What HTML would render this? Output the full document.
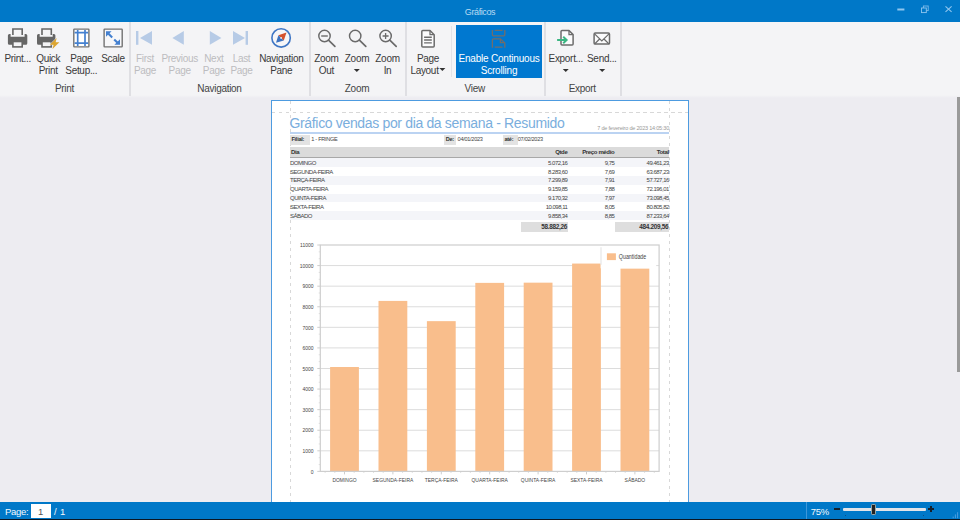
<!DOCTYPE html>
<html>
<head>
<meta charset="utf-8">
<style>
*{box-sizing:border-box;margin:0;padding:0}
html,body{width:960px;height:520px;overflow:hidden}
body{position:relative;background:#edecf1;font-family:"Liberation Sans",sans-serif;font-size:11px;color:#333}
.abs{position:absolute}
#title{left:0;top:0;width:960px;height:22.4px;background:#0078c8}
#title .t{left:0;width:960px;top:7px;text-align:center;font-size:9px;letter-spacing:-0.4px;color:#b9dcf3;line-height:11px}
#ribbon{left:0;top:22px;width:960px;height:75px;background:#f4f4f6}
#ribbonb{left:0;top:94.5px;width:960px;height:3.5px;background:linear-gradient(180deg,#f4f4f6,#edecf1)}
.sep{top:22.4px;width:1.2px;height:73.6px;background:#dfdfe3;margin-left:0.4px}
.lbl{position:absolute;text-align:center;line-height:12px;font-size:10px;letter-spacing:-0.3px;color:#3a3a3a;white-space:nowrap;transform:translateX(-50%)}
.lbl.dis{color:#bcbcbf}
.grp{position:absolute;top:83px;font-size:10px;letter-spacing:-0.3px;line-height:12px;color:#444;transform:translateX(-50%);white-space:nowrap}
.lbl.wh{color:#fff;letter-spacing:-0.2px}
.ar{display:inline-block;width:0;height:0;border-left:3px solid transparent;border-right:3px solid transparent;border-top:3px solid #333;vertical-align:2px}
.ar.in{margin-left:1px;vertical-align:3px}
.ic{position:absolute;overflow:visible}

.fb{background:#e3e3e3;font-size:5.6px;font-weight:bold;line-height:9px;padding-left:1.5px;letter-spacing:-0.3px;color:#333;white-space:nowrap;overflow:hidden}
.ft{font-size:5.6px;line-height:9.2px;letter-spacing:-0.3px;color:#444;white-space:nowrap}
.th{font-size:6px;font-weight:bold;line-height:11.2px;letter-spacing:-0.35px;color:#333;white-space:nowrap}
.td{font-size:6px;line-height:10px;letter-spacing:-0.5px;color:#444;white-space:nowrap}
.tot{background:#dedede;font-size:6.4px;font-weight:bold;line-height:10.2px;letter-spacing:-0.3px;color:#333;text-align:right;padding-right:1px;white-space:nowrap}
#status{left:0;top:502.2px;width:960px;height:18px;background:#0078c8}
.stx{font-size:9.5px;line-height:12px;color:#f4f9fd;letter-spacing:-0.3px;white-space:nowrap}
#page{left:271px;top:100px;width:418px;height:410px;background:#fff;border:1px solid #4f9be0}
</style>
</head>
<body>
<div id="title" class="abs"><div class="t abs">Gráficos</div></div>
<svg class="abs" style="left:885px;top:0" width="75" height="22" viewBox="885 0 75 22">
<path d="M897.3 9.5H904.4" stroke="#8fc6ef" stroke-width="2"/>
<rect x="923.4" y="6" width="4.8" height="4.6" fill="none" stroke="#7dbbea" stroke-width="0.9"/>
<rect x="921.5" y="8" width="4.8" height="4.6" fill="#0078c8" stroke="#8fc6ef" stroke-width="0.9"/>
<path d="M945.5 6.4L951.6 11.9M951.6 6.4L945.5 11.9" stroke="#8fc6ef" stroke-width="1.1"/>
</svg>
<div id="ribbon" class="abs"></div>
<div id="ribbonb" class="abs"></div>
<div class="abs" style="left:456px;top:24.6px;width:85.8px;height:53.2px;background:#0078d0"></div>
<div class="abs" style="left:451.2px;top:26px;width:1.3px;height:51px;background:#e3e3e7"></div>
<div class="abs sep" style="left:129px"></div>
<div class="abs sep" style="left:309px"></div>
<div class="abs sep" style="left:405px"></div>
<div class="abs sep" style="left:544px"></div>
<div class="abs sep" style="left:620px"></div>
<div class="lbl" style="left:17.7px;top:52.6px">Print...</div>
<div class="lbl" style="left:48.2px;top:52.6px">Quick<br>Print</div>
<div class="lbl" style="left:81.3px;top:52.6px">Page<br>Setup...</div>
<div class="lbl" style="left:113px;top:52.6px">Scale</div>
<div class="lbl dis" style="left:145px;top:52.6px">First<br>Page</div>
<div class="lbl dis" style="left:179.7px;top:52.6px">Previous<br>Page</div>
<div class="lbl dis" style="left:213.9px;top:52.6px">Next<br>Page</div>
<div class="lbl dis" style="left:241.5px;top:52.6px">Last<br>Page</div>
<div class="lbl" style="left:281.3px;top:52.6px">Navigation<br>Pane</div>
<div class="lbl" style="left:326.4px;top:52.6px">Zoom<br>Out</div>
<div class="lbl" style="left:357px;top:52.6px">Zoom<br><span class='ar'></span></div>
<div class="lbl" style="left:387.5px;top:52.6px">Zoom<br>In</div>
<div class="lbl" style="left:428px;top:52.6px">Page<br>Layout<span class='ar in'></span></div>
<div class="lbl wh" style="left:499px;top:52.6px">Enable Continuous<br>Scrolling</div>
<div class="lbl" style="left:565.8px;top:52.6px">Export...<br><span class='ar'></span></div>
<div class="lbl" style="left:601.8px;top:52.6px">Send...<br><span class='ar'></span></div>
<div class="grp" style="left:64.5px">Print</div>
<div class="grp" style="left:219.5px">Navigation</div>
<div class="grp" style="left:357px">Zoom</div>
<div class="grp" style="left:474.7px">View</div>
<div class="grp" style="left:582.3px">Export</div>


<svg class="ic" style="left:0;top:22px" width="640" height="75" viewBox="0 22 640 75">
<!-- print -->
<path d="M7.9 35.5Q7.9 34 9.4 34H10.600000000000001V36.7H24.6V34H25.8Q27.3 34 27.3 35.5V43.2Q27.3 44.7 25.8 44.7H9.4Q7.9 44.7 7.9 43.2Z" fill="#666666"/>
<path d="M12.9 35V29H22.2V35" fill="none" stroke="#666666" stroke-width="1.6"/>
<rect x="12.9" y="41.5" width="9.3" height="5.4" fill="#f4f4f6" stroke="#666666" stroke-width="1.6"/>
<!-- quick print -->
<path d="M37.0 35.5Q37.0 34 38.5 34H39.7V36.7H52.699999999999996V34H53.9Q55.4 34 55.4 35.5V43.2Q55.4 44.7 53.9 44.7H38.5Q37.0 44.7 37.0 43.2Z" fill="#666666"/>
<path d="M42.0 35V29H51.3V35" fill="none" stroke="#666666" stroke-width="1.6"/>
<rect x="42.0" y="41.5" width="9.3" height="5.4" fill="#f4f4f6" stroke="#666666" stroke-width="1.6"/>
<path d="M56.7 38 L49.8 44.7 L53.6 44.7 L52.5 48.9 L59.4 42.2 L55.6 42.2 Z" fill="#dda52f" stroke="#f4f4f6" stroke-width="0.9" paint-order="stroke"/>
<!-- page setup -->
<rect x="73.8" y="29.1" width="15.1" height="17.8" rx="0.6" fill="#fff" stroke="#727272" stroke-width="1.4"/>
<path d="M77.7 29.9V46.1M85 29.9V46.1M74.6 32.7H88.1M74.6 43.1H88.1" stroke="#4480d0" stroke-width="1.7" fill="none"/>
<!-- scale -->
<rect x="104.1" y="29.1" width="18.1" height="17.8" rx="0.6" fill="#f7f7f9" stroke="#727272" stroke-width="1.4"/>
<path d="M108.5 33.7L112.2 37.4M114.2 39.4L117.6 42.8" stroke="#4480d0" stroke-width="2.1"/>
<path d="M106 31.2h5.6l-5.6 5.6zM120 44.8h-5.6l5.6-5.6z" fill="#4480d0"/>
<!-- nav -->
<rect x="136" y="31" width="2.4" height="13.8" fill="#b7cbe6"/>
<path d="M140 37.9L152 31V44.8Z" fill="#b7cbe6"/>
<path d="M172.4 37.9L183.8 31V44.8Z" fill="#b7cbe6"/>
<path d="M221.4 37.9L209.8 31V44.8Z" fill="#b7cbe6"/>
<path d="M245 37.9L233 31V44.8Z" fill="#b7cbe6"/>
<rect x="245.6" y="31" width="2.4" height="13.8" fill="#b7cbe6"/>
<!-- compass -->
<circle cx="281.1" cy="37.9" r="9.2" fill="#f6f6f8" stroke="#3f76c4" stroke-width="1.6"/>
<path d="M286.5 32.6L278.4 35.3L283.8 40.4Z" fill="#d4522e"/>
<path d="M276 42.8L278.4 35.3L283.8 40.4Z" fill="#3c72c0"/>
<circle cx="281.1" cy="37.9" r="0.9" fill="#f6f6f8"/>
<!-- zoom -->
<circle cx="324.5" cy="36" r="5.7" fill="none" stroke="#6a6a6a" stroke-width="1.45"/><path d="M328.5 40.2L334.90000000000003 46.4" stroke="#6a6a6a" stroke-width="1.7" stroke-linecap="round"/><path d="M321.2 36H327.8" stroke="#6a6a6a" stroke-width="1.4"/>
<circle cx="355.2" cy="36" r="5.7" fill="none" stroke="#6a6a6a" stroke-width="1.45"/><path d="M359.4 40.2L365.8 46.4" stroke="#6a6a6a" stroke-width="1.7" stroke-linecap="round"/>
<circle cx="385.6" cy="36" r="5.7" fill="none" stroke="#6a6a6a" stroke-width="1.45"/><path d="M389.8 40.2L396.20000000000005 46.4" stroke="#6a6a6a" stroke-width="1.7" stroke-linecap="round"/><path d="M382.6 36H388.6M385.6 33V39" stroke="#6a6a6a" stroke-width="1.3"/>
<!-- page layout -->
<path d="M421.8 31.5Q421.8 30.5 422.8 30.5H430L434.2 34.7V45.9Q434.2 46.9 433.2 46.9H422.8Q421.8 46.9 421.8 45.9Z" fill="#fbfbfc" stroke="#6c6c6c" stroke-width="1.5" stroke-linejoin="round"/>
<path d="M430 30.7V34.7H434" fill="none" stroke="#6c6c6c" stroke-width="1.3"/>
<path d="M424.1 37.2H431.8M424.1 40H431.8M424.1 42.9H431.8" stroke="#6c6c6c" stroke-width="1.4"/>
<!-- continuous -->
<path d="M492.4 30V34.8Q492.4 35.8 493.4 35.8H503.8Q504.8 35.8 504.8 34.8V30" fill="none" stroke="#716d6a" stroke-width="1.3"/>
<path d="M494.7 30.4H502.5M494.7 47.2H502.5" fill="none" stroke="#716d6a" stroke-width="1.3"/>
<path d="M492.4 47.8V39.8Q492.4 38.8 493.4 38.8H500.4L504.8 43V47.8" fill="none" stroke="#716d6a" stroke-width="1.3"/>
<path d="M500.4 38.8V42.6H504.6" fill="none" stroke="#716d6a" stroke-width="1.3"/>
<!-- export -->
<path d="M561 31.5Q561 30.5 562 30.5H569L573.1 34.6V44.1Q573.1 45.1 572.1 45.1H562Q561 45.1 561 44.1Z" fill="#fbfbfc" stroke="#6c6c6c" stroke-width="1.5" stroke-linejoin="round"/>
<path d="M569 30.7V34.6H573" fill="none" stroke="#6c6c6c" stroke-width="1.3"/>
<path d="M557.1 40H566.2M563.2 36.8L566.6 40L563.2 43.2" fill="none" stroke="#3bb683" stroke-width="2" stroke-linejoin="miter"/>
<!-- send -->
<rect x="594.1" y="33.1" width="15.4" height="11" rx="1.2" fill="#fbfbfc" stroke="#6c6c6c" stroke-width="1.5"/>
<path d="M594.6 33.8L601.8 41L609 33.8M594.6 44L599.6 39M609 44L604 39" fill="none" stroke="#6c6c6c" stroke-width="1.2"/>
<!-- endicons -->
</svg>
<div class="abs" style="left:270.5px;top:99.7px;width:418.7px;height:410px;background:#fff;border:1.6px solid #4d9be0"></div>
<div class="abs" style="left:272px;top:112px;width:416px;height:1px;background:repeating-linear-gradient(90deg,#d8d8d8 0 3.5px,transparent 3.5px 7px)"></div>
<div class="abs" style="left:289.5px;top:101px;width:1px;height:402px;background:repeating-linear-gradient(180deg,#d8d8d8 0 3.5px,transparent 3.5px 7px)"></div>
<div class="abs" style="left:668.7px;top:101px;width:1px;height:402px;background:repeating-linear-gradient(180deg,#d8d8d8 0 3.5px,transparent 3.5px 7px)"></div>
<div class="abs" style="left:289.5px;top:115px;font-size:14px;line-height:16px;letter-spacing:-0.34px;color:#7aaedd;white-space:nowrap">Gráfico vendas por dia da semana - Resumido</div>
<div class="abs" style="left:290px;top:132.2px;width:379px;height:1.4px;background:#bbd3f2"></div>
<div class="abs rt" style="right:291px;top:124.6px;font-size:5.5px;line-height:7px;color:#999;white-space:nowrap;letter-spacing:-0.2px">7 de fevereiro de 2023 14:05:30</div>
<div class="abs fb" style="left:290px;top:135.2px;width:20.0px;height:10.2px">Filial:</div>
<div class="abs fb" style="left:444.3px;top:135.2px;width:12.1px;height:10.2px">De:</div>
<div class="abs fb" style="left:503px;top:135.2px;width:14.6px;height:10.2px">até:</div>
<div class="abs ft" style="left:311.3px;top:135.2px">1 - FRINGE</div>
<div class="abs ft" style="left:457.6px;top:135.2px">04/01/2023</div>
<div class="abs ft" style="left:517.8px;top:135.2px">07/02/2023</div>
<div class="abs" style="left:290px;top:147.2px;width:379px;height:9.6px;background:#dbdbdb"></div>
<div class="abs" style="left:290px;top:156.8px;width:379px;height:1.4px;background:#a8a8a8"></div>
<div class="abs th" style="left:291px;top:147.2px">Dia</div>
<div class="abs th" style="right:392.6px;top:147.2px">Qtde</div>
<div class="abs th" style="right:345.70000000000005px;top:147.2px">Preço médio</div>
<div class="abs th" style="right:291.20000000000005px;top:147.2px">Total</div>
<div class="abs" style="left:290px;top:158.30px;width:379px;height:8.6px;background:#f4f5f9"></div>
<div class="abs td" style="left:290px;top:157.80px">DOMINGO</div>
<div class="abs td" style="right:392.6px;top:157.80px">5.072,16</div>
<div class="abs td" style="right:345.70000000000005px;top:157.80px">9,75</div>
<div class="abs td" style="right:291.20000000000005px;top:157.80px">49.461,23</div>
<div class="abs td" style="left:290px;top:166.63px">SEGUNDA-FEIRA</div>
<div class="abs td" style="right:392.6px;top:166.63px">8.283,60</div>
<div class="abs td" style="right:345.70000000000005px;top:166.63px">7,69</div>
<div class="abs td" style="right:291.20000000000005px;top:166.63px">63.687,23</div>
<div class="abs" style="left:290px;top:175.96px;width:379px;height:8.6px;background:#f4f5f9"></div>
<div class="abs td" style="left:290px;top:175.46px">TERÇA-FEIRA</div>
<div class="abs td" style="right:392.6px;top:175.46px">7.299,89</div>
<div class="abs td" style="right:345.70000000000005px;top:175.46px">7,91</div>
<div class="abs td" style="right:291.20000000000005px;top:175.46px">57.727,16</div>
<div class="abs td" style="left:290px;top:184.29px">QUARTA-FEIRA</div>
<div class="abs td" style="right:392.6px;top:184.29px">9.159,85</div>
<div class="abs td" style="right:345.70000000000005px;top:184.29px">7,88</div>
<div class="abs td" style="right:291.20000000000005px;top:184.29px">72.196,01</div>
<div class="abs" style="left:290px;top:193.62px;width:379px;height:8.6px;background:#f4f5f9"></div>
<div class="abs td" style="left:290px;top:193.12px">QUINTA-FEIRA</div>
<div class="abs td" style="right:392.6px;top:193.12px">9.170,32</div>
<div class="abs td" style="right:345.70000000000005px;top:193.12px">7,97</div>
<div class="abs td" style="right:291.20000000000005px;top:193.12px">73.098,45</div>
<div class="abs td" style="left:290px;top:201.95px">SEXTA-FEIRA</div>
<div class="abs td" style="right:392.6px;top:201.95px">10.098,11</div>
<div class="abs td" style="right:345.70000000000005px;top:201.95px">8,05</div>
<div class="abs td" style="right:291.20000000000005px;top:201.95px">80.805,82</div>
<div class="abs" style="left:290px;top:211.28px;width:379px;height:8.6px;background:#f4f5f9"></div>
<div class="abs td" style="left:290px;top:210.78px">SÁBADO</div>
<div class="abs td" style="right:392.6px;top:210.78px">9.858,34</div>
<div class="abs td" style="right:345.70000000000005px;top:210.78px">8,85</div>
<div class="abs td" style="right:291.20000000000005px;top:210.78px">87.233,64</div>
<div class="abs tot" style="left:521px;top:221.9px;width:47px;height:10.2px">58.882,26</div>
<div class="abs tot" style="left:615.3px;top:221.9px;width:54px;height:10.2px">484.209,56</div>
<svg class="abs" style="left:0;top:0" width="960" height="520" viewBox="0 0 960 520">
<rect x="320.3" y="245.0" width="338.8" height="226.39999999999998" fill="#fff"/>
<path d="M320.3 450.82H659.1" stroke="#dcdcdc" stroke-width="1"/>
<path d="M320.3 430.24H659.1" stroke="#dcdcdc" stroke-width="1"/>
<path d="M320.3 409.65H659.1" stroke="#dcdcdc" stroke-width="1"/>
<path d="M320.3 389.07H659.1" stroke="#dcdcdc" stroke-width="1"/>
<path d="M320.3 368.49H659.1" stroke="#dcdcdc" stroke-width="1"/>
<path d="M320.3 347.91H659.1" stroke="#dcdcdc" stroke-width="1"/>
<path d="M320.3 327.33H659.1" stroke="#dcdcdc" stroke-width="1"/>
<path d="M320.3 306.75H659.1" stroke="#dcdcdc" stroke-width="1"/>
<path d="M320.3 286.16H659.1" stroke="#dcdcdc" stroke-width="1"/>
<path d="M320.3 265.58H659.1" stroke="#dcdcdc" stroke-width="1"/>
<path d="M317.3 471.40H320.3" stroke="#c8c8c8" stroke-width="0.9"/>
<path d="M318.7 464.55H320.3M318.7 457.67H320.3" stroke="#d4d4d4" stroke-width="0.7"/>
<text transform="translate(313.5,473.60) scale(0.83,1)" text-anchor="end" font-size="6" fill="#444">0</text>
<path d="M317.3 450.82H320.3" stroke="#c8c8c8" stroke-width="0.9"/>
<path d="M318.7 443.96H320.3M318.7 437.09H320.3" stroke="#d4d4d4" stroke-width="0.7"/>
<text transform="translate(313.5,453.02) scale(0.83,1)" text-anchor="end" font-size="6" fill="#444">1000</text>
<path d="M317.3 430.24H320.3" stroke="#c8c8c8" stroke-width="0.9"/>
<path d="M318.7 423.38H320.3M318.7 416.51H320.3" stroke="#d4d4d4" stroke-width="0.7"/>
<text transform="translate(313.5,432.44) scale(0.83,1)" text-anchor="end" font-size="6" fill="#444">2000</text>
<path d="M317.3 409.65H320.3" stroke="#c8c8c8" stroke-width="0.9"/>
<path d="M318.7 402.80H320.3M318.7 395.93H320.3" stroke="#d4d4d4" stroke-width="0.7"/>
<text transform="translate(313.5,411.85) scale(0.83,1)" text-anchor="end" font-size="6" fill="#444">3000</text>
<path d="M317.3 389.07H320.3" stroke="#c8c8c8" stroke-width="0.9"/>
<path d="M318.7 382.22H320.3M318.7 375.34H320.3" stroke="#d4d4d4" stroke-width="0.7"/>
<text transform="translate(313.5,391.27) scale(0.83,1)" text-anchor="end" font-size="6" fill="#444">4000</text>
<path d="M317.3 368.49H320.3" stroke="#c8c8c8" stroke-width="0.9"/>
<path d="M318.7 361.64H320.3M318.7 354.76H320.3" stroke="#d4d4d4" stroke-width="0.7"/>
<text transform="translate(313.5,370.69) scale(0.83,1)" text-anchor="end" font-size="6" fill="#444">5000</text>
<path d="M317.3 347.91H320.3" stroke="#c8c8c8" stroke-width="0.9"/>
<path d="M318.7 341.06H320.3M318.7 334.18H320.3" stroke="#d4d4d4" stroke-width="0.7"/>
<text transform="translate(313.5,350.11) scale(0.83,1)" text-anchor="end" font-size="6" fill="#444">6000</text>
<path d="M317.3 327.33H320.3" stroke="#c8c8c8" stroke-width="0.9"/>
<path d="M318.7 320.47H320.3M318.7 313.60H320.3" stroke="#d4d4d4" stroke-width="0.7"/>
<text transform="translate(313.5,329.53) scale(0.83,1)" text-anchor="end" font-size="6" fill="#444">7000</text>
<path d="M317.3 306.75H320.3" stroke="#c8c8c8" stroke-width="0.9"/>
<path d="M318.7 299.89H320.3M318.7 293.02H320.3" stroke="#d4d4d4" stroke-width="0.7"/>
<text transform="translate(313.5,308.95) scale(0.83,1)" text-anchor="end" font-size="6" fill="#444">8000</text>
<path d="M317.3 286.16H320.3" stroke="#c8c8c8" stroke-width="0.9"/>
<path d="M318.7 279.31H320.3M318.7 272.44H320.3" stroke="#d4d4d4" stroke-width="0.7"/>
<text transform="translate(313.5,288.36) scale(0.83,1)" text-anchor="end" font-size="6" fill="#444">9000</text>
<path d="M317.3 265.58H320.3" stroke="#c8c8c8" stroke-width="0.9"/>
<path d="M318.7 258.73H320.3M318.7 251.85H320.3" stroke="#d4d4d4" stroke-width="0.7"/>
<text transform="translate(313.5,267.78) scale(0.83,1)" text-anchor="end" font-size="6" fill="#444">10000</text>
<path d="M317.3 245.00H320.3" stroke="#c8c8c8" stroke-width="0.9"/>
<text transform="translate(313.5,247.20) scale(0.83,1)" text-anchor="end" font-size="6" fill="#444">11000</text>
<rect x="330.10" y="367.01" width="28.8" height="104.39" fill="#f9be8c"/>
<rect x="378.50" y="300.91" width="28.8" height="170.49" fill="#f9be8c"/>
<rect x="426.90" y="321.15" width="28.8" height="150.25" fill="#f9be8c"/>
<rect x="475.30" y="282.87" width="28.8" height="188.53" fill="#f9be8c"/>
<rect x="523.70" y="282.66" width="28.8" height="188.74" fill="#f9be8c"/>
<rect x="572.10" y="263.56" width="28.8" height="207.84" fill="#f9be8c"/>
<rect x="620.50" y="268.50" width="28.8" height="202.90" fill="#f9be8c"/>
<path d="M344.50 471.4v3" stroke="#c8c8c8" stroke-width="0.9"/>
<path d="M325.14 471.4v1.6M334.82 471.4v1.6M354.18 471.4v1.6M363.86 471.4v1.6" stroke="#d4d4d4" stroke-width="0.7"/>
<text transform="translate(344.50,482.3) scale(0.8,1)" text-anchor="middle" font-size="6.2" fill="#444">DOMINGO</text>
<path d="M392.90 471.4v3" stroke="#c8c8c8" stroke-width="0.9"/>
<path d="M373.54 471.4v1.6M383.22 471.4v1.6M402.58 471.4v1.6M412.26 471.4v1.6" stroke="#d4d4d4" stroke-width="0.7"/>
<text transform="translate(392.90,482.3) scale(0.8,1)" text-anchor="middle" font-size="6.2" fill="#444">SEGUNDA-FEIRA</text>
<path d="M441.30 471.4v3" stroke="#c8c8c8" stroke-width="0.9"/>
<path d="M421.94 471.4v1.6M431.62 471.4v1.6M450.98 471.4v1.6M460.66 471.4v1.6" stroke="#d4d4d4" stroke-width="0.7"/>
<text transform="translate(441.30,482.3) scale(0.8,1)" text-anchor="middle" font-size="6.2" fill="#444">TERÇA-FEIRA</text>
<path d="M489.70 471.4v3" stroke="#c8c8c8" stroke-width="0.9"/>
<path d="M470.34 471.4v1.6M480.02 471.4v1.6M499.38 471.4v1.6M509.06 471.4v1.6" stroke="#d4d4d4" stroke-width="0.7"/>
<text transform="translate(489.70,482.3) scale(0.8,1)" text-anchor="middle" font-size="6.2" fill="#444">QUARTA-FEIRA</text>
<path d="M538.10 471.4v3" stroke="#c8c8c8" stroke-width="0.9"/>
<path d="M518.74 471.4v1.6M528.42 471.4v1.6M547.78 471.4v1.6M557.46 471.4v1.6" stroke="#d4d4d4" stroke-width="0.7"/>
<text transform="translate(538.10,482.3) scale(0.8,1)" text-anchor="middle" font-size="6.2" fill="#444">QUINTA-FEIRA</text>
<path d="M586.50 471.4v3" stroke="#c8c8c8" stroke-width="0.9"/>
<path d="M567.14 471.4v1.6M576.82 471.4v1.6M596.18 471.4v1.6M605.86 471.4v1.6" stroke="#d4d4d4" stroke-width="0.7"/>
<text transform="translate(586.50,482.3) scale(0.8,1)" text-anchor="middle" font-size="6.2" fill="#444">SEXTA-FEIRA</text>
<path d="M634.90 471.4v3" stroke="#c8c8c8" stroke-width="0.9"/>
<path d="M615.54 471.4v1.6M625.22 471.4v1.6M644.58 471.4v1.6M654.26 471.4v1.6" stroke="#d4d4d4" stroke-width="0.7"/>
<text transform="translate(634.90,482.3) scale(0.8,1)" text-anchor="middle" font-size="6.2" fill="#444">SÁBADO</text>
<rect x="600.6" y="245.0" width="55.6" height="23.3" fill="#fff"/>
<path d="M601 247.3V264.8" stroke="#dedede" stroke-width="0.9"/>
<rect x="320.3" y="245.0" width="338.8" height="226.39999999999998" fill="none" stroke="#cecece" stroke-width="1.2"/>
<rect x="606.9" y="253.3" width="9" height="6.8" fill="#f9be8c"/>
<text transform="translate(618.8,258.5) scale(0.83,1)" font-size="6.4" fill="#444">Quantidade</text>
</svg>
<div class="abs" style="left:957px;top:96.5px;width:3px;height:275px;background:#9a9a9a"></div>
<div id="status" class="abs">
<div class="abs" style="left:0;top:16.5px;width:960px;height:1.5px;background:#0b1622"></div>
<div class="abs stx" style="left:5px;top:3.8px">Page:</div>
<div class="abs" style="left:30.6px;top:1.8px;width:20px;height:14.2px;background:#fff;color:#555;font-size:9.5px;line-height:15.6px;text-align:center">1</div>
<div class="abs stx" style="left:54px;top:3.8px;letter-spacing:0.4px">/ 1</div>
<div class="abs" style="left:805.5px;top:0;width:1px;height:16.5px;background:#3d97da"></div>
<div class="abs stx" style="left:810.8px;top:3.8px">75%</div>
<div class="abs" style="left:834.2px;top:6.2px;width:5.6px;height:1.8px;background:#15202b"></div>
<div class="abs" style="left:842.5px;top:5.5px;width:83.3px;height:3.3px;background:#e2e4e8;border-radius:1px"></div>
<div class="abs" style="left:870.6px;top:2px;width:5.4px;height:10.4px;background:#222;border:0.6px solid #9aa;border-radius:1.2px"></div>
<div class="abs" style="left:928.3px;top:6.2px;width:5.6px;height:1.8px;background:#15202b"></div>
<div class="abs" style="left:930.2px;top:4.3px;width:1.8px;height:5.6px;background:#15202b"></div>
<div class="abs" style="left:844.5px;top:13px;width:1px;height:1px;background:#0a4f86"></div>
<div class="abs" style="left:922.8px;top:13px;width:1px;height:1px;background:#0a4f86"></div>
<svg class="abs" style="left:950px;top:9px" width="9" height="8" viewBox="0 0 9 8"><path d="M7.6 1.2v6M5.4 3.4v3.8M3.2 5.6v1.6" stroke="#4a9de0" stroke-width="1"/></svg>
</div>
</body>
</html>
